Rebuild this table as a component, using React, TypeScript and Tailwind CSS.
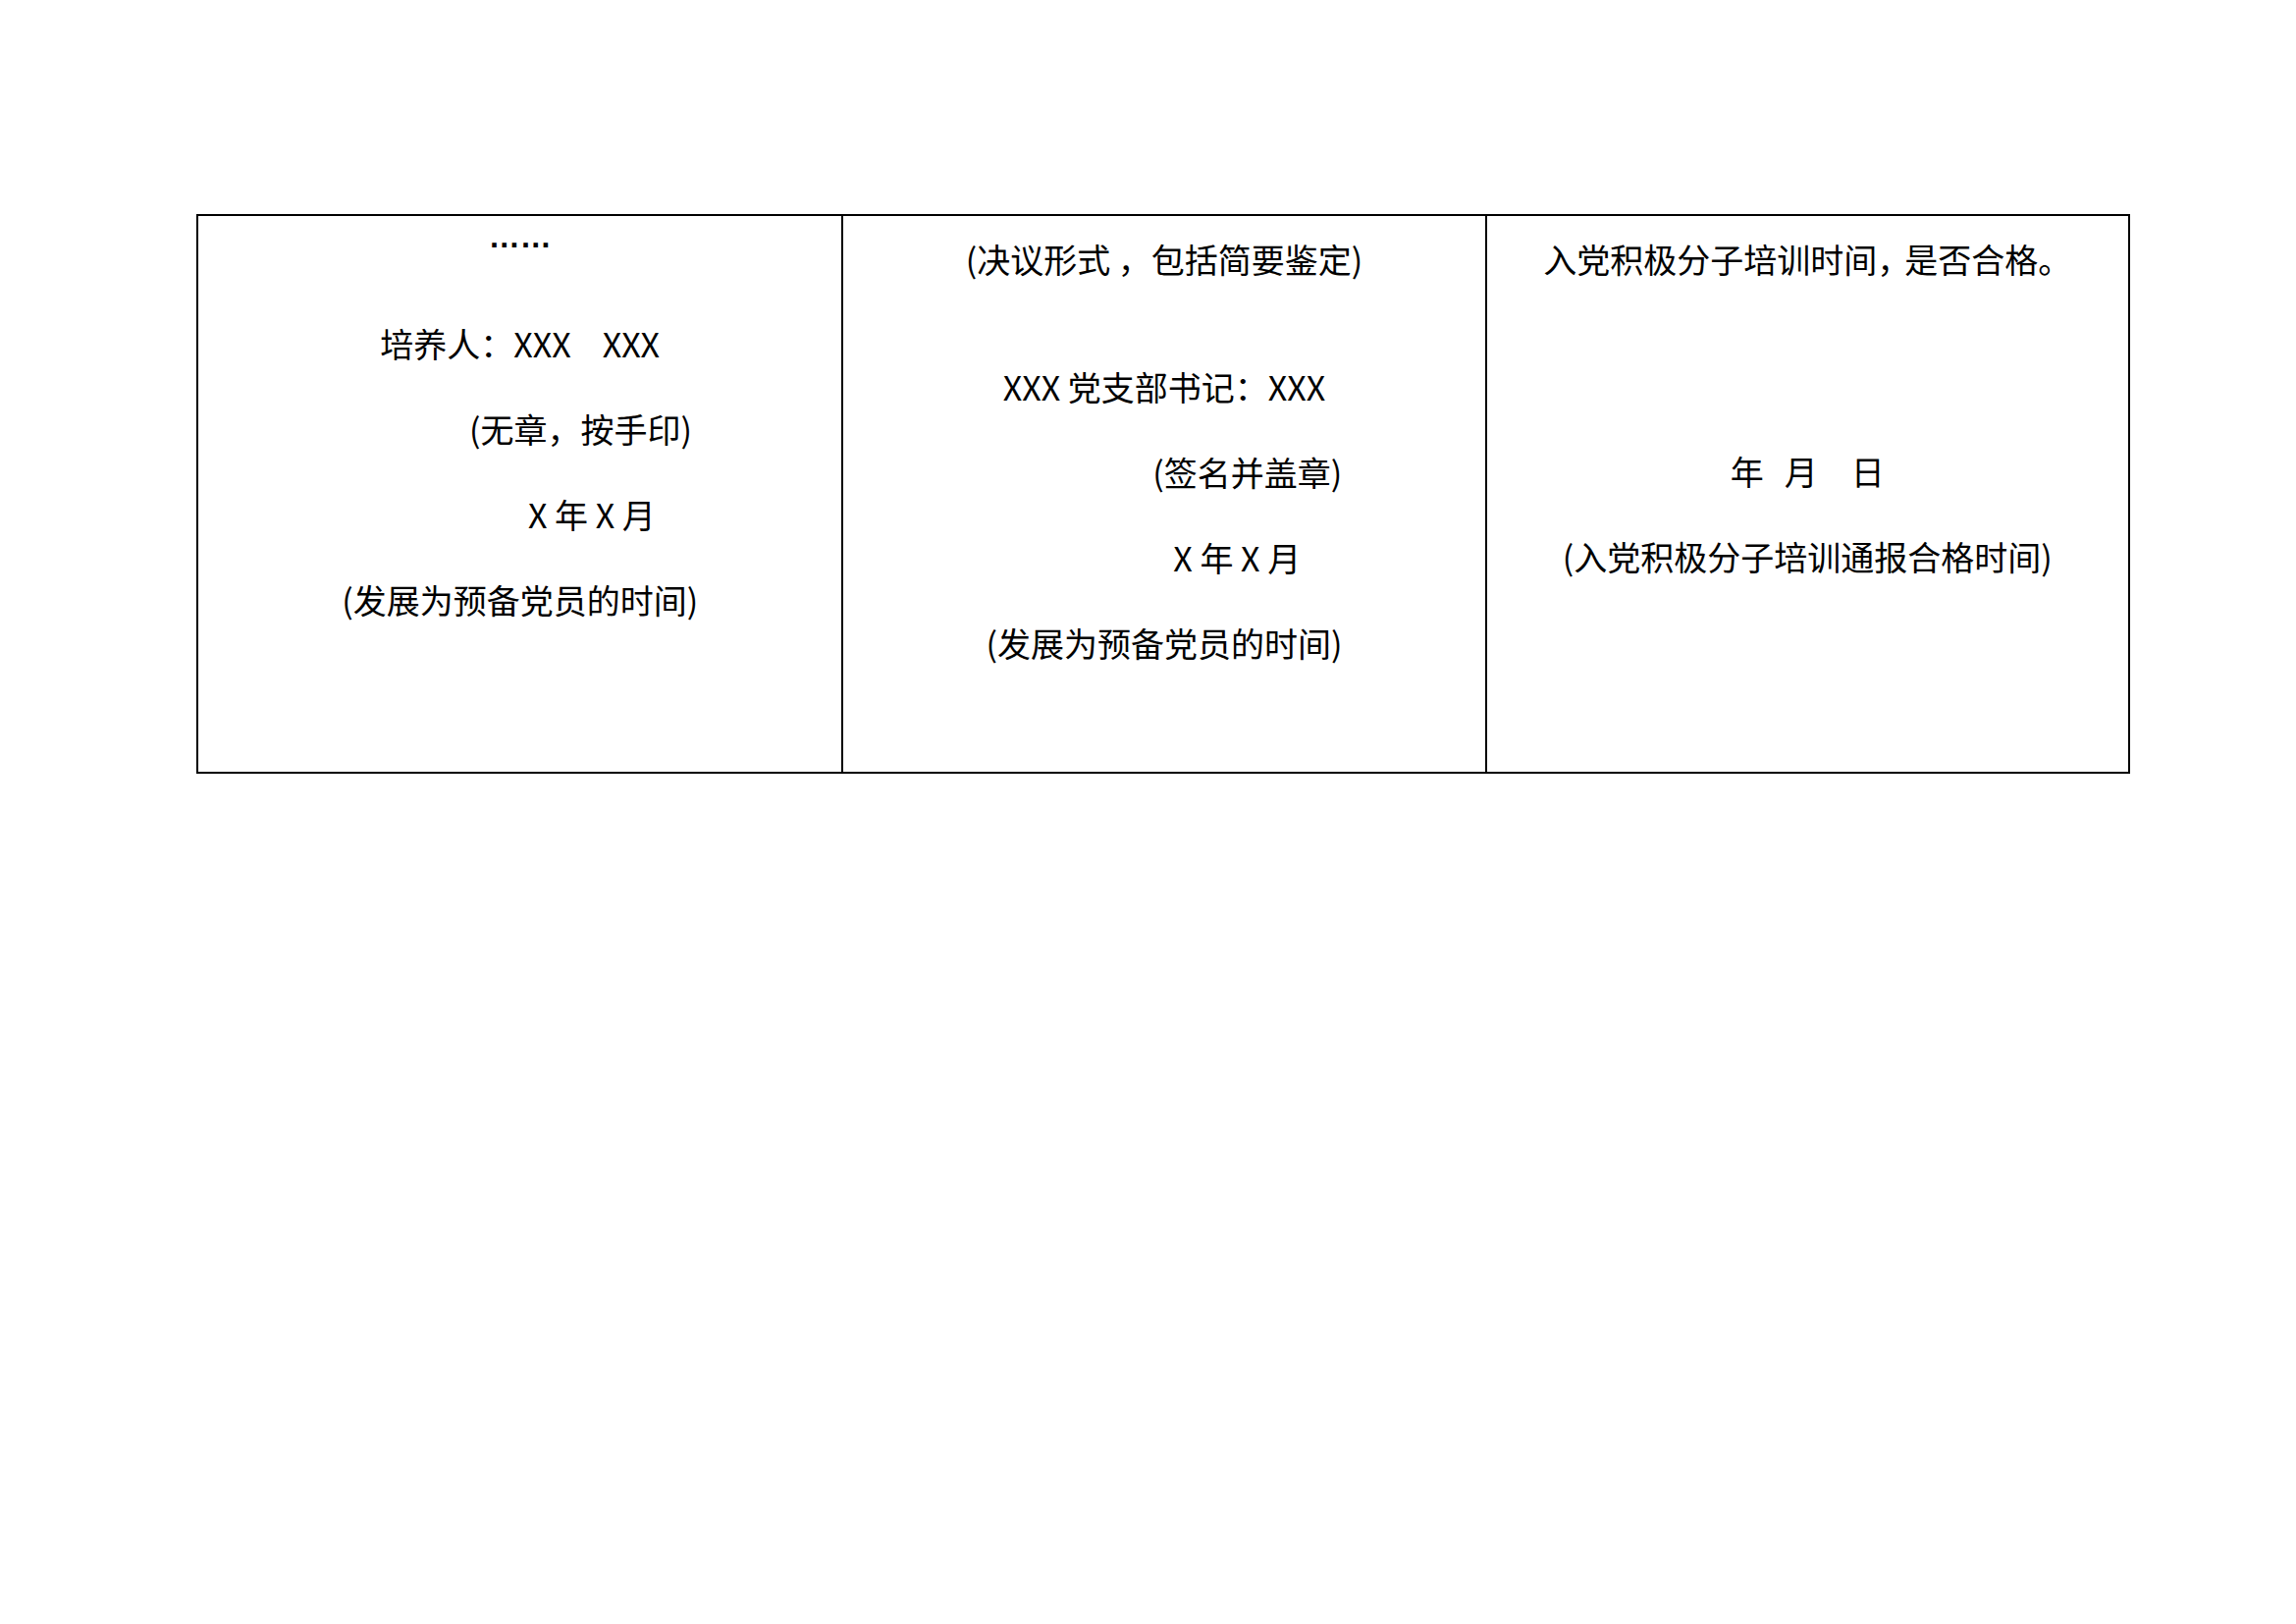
const cjk = "font-['Noto_Sans_CJK_SC','Noto_Sans',sans-serif]";

export default function App() {
  return (
    <div className="min-h-[1654px] w-full bg-white pt-[218px] pl-[200px] text-black">
      <div className="grid h-[570px] w-[1970px] grid-cols-3 border-2 border-black">
        {/* left cell */}
        <div className={`${cjk} flex flex-col text-[34px] text-black`}>
          <p className="h-[42px] text-center font-['Liberation_Sans',sans-serif] text-[32px] font-bold leading-[42px]">……</p>
          <p className="mt-[44px] flex justify-center leading-[87px]">
            <span>培养人：XXX</span>
            <span className="ml-[32px]">XXX</span>
          </p>
          <p className="whitespace-pre pl-[276px] leading-[87px]">(无章，按手印)</p>
          <p className="whitespace-pre pl-[336px] leading-[87px]">X 年 X 月</p>
          <p className="whitespace-pre text-center leading-[87px]">(发展为预备党员的时间)</p>
        </div>

        {/* middle cell */}
        <div className={`${cjk} flex flex-col border-l-2 border-black text-[34px]`}>
          <p className="whitespace-pre text-center leading-[87px]">(决议形式 ，包括简要鉴定)</p>
          <p className="mt-[43px] whitespace-pre text-center leading-[87px]">XXX 党支部书记：XXX</p>
          <p className="whitespace-pre pl-[315px] leading-[87px]">(签名并盖章)</p>
          <p className="whitespace-pre pl-[336px] leading-[87px]">X 年 X 月</p>
          <p className="whitespace-pre text-center leading-[87px]">(发展为预备党员的时间)</p>
        </div>

        {/* right cell */}
        <div className={`${cjk} flex flex-col border-l-2 border-black text-[34px]`}>
          <p className="text-center leading-[87px]">
            入党积极分子培训时间<span className="tracking-[-6px]">，</span>是否合格。
          </p>
          <p className="mt-[129px] flex justify-center leading-[87px]">
            <span>年</span>
            <span className="ml-[21px]">月</span>
            <span className="ml-[34px]">日</span>
          </p>
          <p className="whitespace-pre text-center leading-[87px]">(入党积极分子培训通报合格时间)</p>
        </div>
      </div>
    </div>
  );
}
